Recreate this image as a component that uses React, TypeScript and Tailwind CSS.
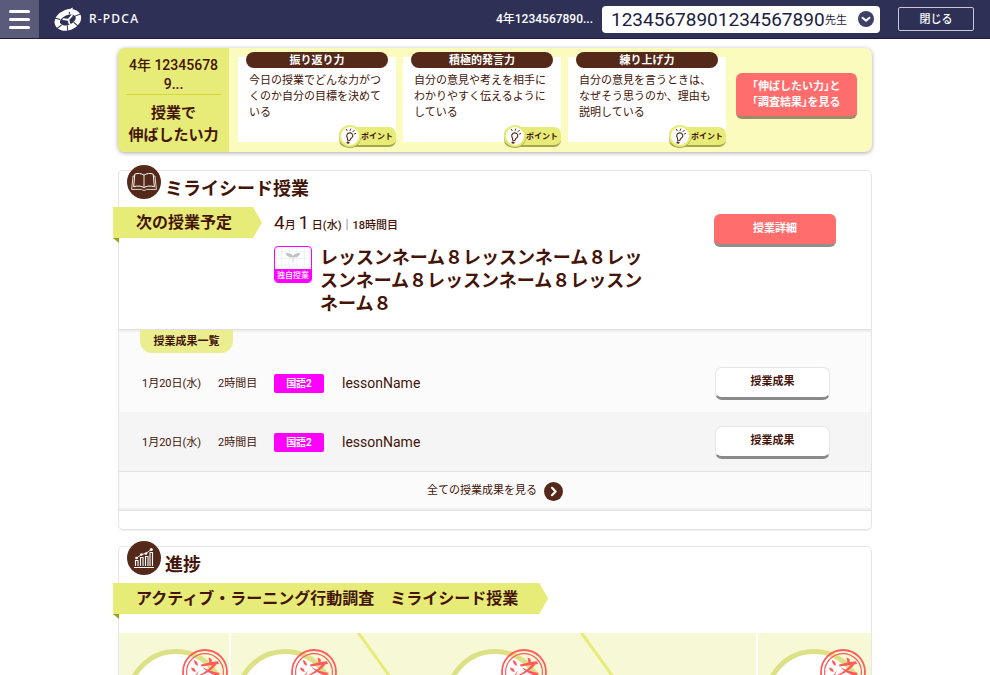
import React from "react";

const lessons = [
  { date: "1月20日(水)", period: "2時間目", subject: "国語2", name: "lessonName" },
  { date: "1月20日(水)", period: "2時間目", subject: "国語2", name: "lessonName" },
];

const abilities = [
  { title: "振り返り力", body: "今日の授業でどんな力がつくのか自分の目標を決めている" },
  { title: "積極的発言力", body: "自分の意見や考えを相手にわかりやすく伝えるようにしている" },
  { title: "練り上げ力", body: "自分の意見を言うときは、なぜそう思うのか、理由も説明している" },
];

function Logo() {
  return (
    <svg className="h-6 w-[30px]" viewBox="0 0 30 24" fill="none" aria-hidden="true">
      <g transform="rotate(-22 15 12)">
        <ellipse cx="14.5" cy="12.8" rx="11" ry="7.6" stroke="#fff" strokeWidth="5.4" />
        <path d="M3 6 L7.5 9.5 M0 17 L7 15 M10 24 L12 17.5 M22 23 L19 17 M29 12 L22 12 M21 2 L18 8" stroke="#2f3056" strokeWidth="1" />
        <path d="M15 12.8 L10 10 M15 12.8 L20.5 10 M15 12.8 L14.6 17.5" stroke="#fff" strokeWidth="1.8" />
      </g>
      <path d="M11 4.5 L20 0.6 L18.5 5 Z" fill="#fff" />
    </svg>
  );
}

function BulbIcon() {
  return (
    <svg className="h-[17px] w-[14px]" viewBox="0 0 14 18" fill="none" stroke="#54291a" strokeLinecap="round" aria-hidden="true">
      <path d="M4.6 13 L4.3 10.6 C2.8 8.6 3.4 5.5 6.4 5.2 C9.6 5 11 8 9.2 10 L7.6 11.6 L6.8 13.2 Z" strokeWidth="1.2" />
      <path d="M4.2 15.4 L5.6 15.6" strokeWidth="2" />
      <path d="M4 2.8 L3.2 1.4 M7.2 2.6 L7.8 1 M10 4 L11.6 2.4 M11.6 6.4 L13 5.8" strokeWidth="1" />
    </svg>
  );
}

function BookIcon() {
  return (
    <svg className="h-[22px] w-7" viewBox="0 0 28 22" fill="none" stroke="#fff" strokeWidth="1" strokeLinejoin="round" aria-hidden="true">
      <path d="M14 4.2 C11.5 2.2 7.5 2 4.8 3.2 L3.6 15.8 C7 14.6 11.5 14.8 14 16.6 C16.5 14.8 21 14.6 24.4 15.8 L23.2 3.2 C20.5 2 16.5 2.2 14 4.2 Z" />
      <path d="M14 4.2 V16.6" strokeWidth="0.9" />
      <path d="M4.6 5 H3 L1.6 18.4 H11.6 C12.4 19.6 15.6 19.6 16.4 18.4 H26.4 L25 5 H23.4" strokeWidth="0.8" />
    </svg>
  );
}

function ChartIcon() {
  return (
    <svg className="h-[22px] w-[22px]" viewBox="0 0 22 22" fill="none" stroke="#fff" aria-hidden="true">
      <path d="M1 20.5 H21" strokeWidth="1" />
      <path d="M2.5 19 V13.5 H5 V19 M7.5 19 V10.5 H10 V19 M12.5 19 V9.5 H15 V19 M17 19 V5.5 H19.5 V19" strokeWidth="1.1" />
      <path d="M3.5 11 L8.5 7.5 L13 6.5 L18 2.5" strokeWidth="0.9" />
      <g fill="#fff" stroke="none">
        <circle cx="3.5" cy="11" r="1.3" />
        <circle cx="8.5" cy="7.5" r="1.3" />
        <circle cx="13" cy="6.5" r="1.3" />
        <circle cx="18.3" cy="2.4" r="1.5" />
      </g>
    </svg>
  );
}

function LessonThumb() {
  return (
    <div className="flex h-[37px] w-[38px] shrink-0 flex-col overflow-hidden rounded-[4px] border border-[#ff00ff] bg-white">
      <svg className="min-h-0 flex-1" viewBox="0 0 36 23" fill="none" aria-hidden="true">
        <path d="M6 0 V23 M14 0 V23 M22 0 V23 M30 0 V23 M0 5 H36 M0 12 H36 M0 19 H36" stroke="#e3eff0" strokeWidth="0.7" />
        <path d="M17.6 16 V10.8 C14 11 11.2 9.8 10.4 6.4 C14 6.2 17 7 18 9.8 C19 7 22 6.2 25.6 6.4 C24.8 9.8 22 11 18.5 10.8 V16 Z" fill="#c2c2c2" />
      </svg>
      <span className="bg-[#ff00ff] text-center text-[8px] leading-[13px] font-medium text-white">独自授業</span>
    </div>
  );
}

function Ribbon({ children }: { children: React.ReactNode }) {
  return (
    <div className="-ml-[6px] w-fit">
      <h3 className="bg-[#e7eb78] pr-[30px] pl-[23px] text-[16px] leading-[31px] font-bold [clip-path:polygon(0_0,calc(100%-9px)_0,100%_50%,calc(100%-9px)_100%,0_100%)]">
        {children}
      </h3>
      <div className="h-[5px] w-[6px] bg-[#9aa01c] [clip-path:polygon(0_0,100%_0,100%_100%)]" />
    </div>
  );
}

function SectionTitle({ icon, children }: { icon: React.ReactNode; children: React.ReactNode }) {
  return (
    <div className="-mt-[6px] flex h-[42px] items-start gap-1 pl-2">
      <span className="flex size-[34px] items-center justify-center rounded-full bg-[#54291a]">{icon}</span>
      <h2 className="pt-[11px] text-[18px] leading-[26px] font-bold">{children}</h2>
    </div>
  );
}

function Stamp() {
  return (
    <svg className="absolute top-0 left-[56px] size-[46px]" viewBox="0 0 46 46" fill="none" aria-hidden="true">
      <circle cx="23" cy="23" r="22" stroke="#ff5c5c" strokeWidth="1.8" />
      <circle cx="23" cy="23" r="18.4" stroke="#ff5c5c" strokeWidth="1.2" />
      <g fill="#ff5c5c">
        <path d="M12 11 Q16.5 12.5 15.6 17 Q12 15.5 12 11 Z M9 18.5 Q14 19 13.6 23 Q9.6 22.5 9 18.5 Z M9 32 L17 21.5 L13 31 Z" />
        <path d="M26.5 8.5 Q31 9.5 29.6 13 L36 12.2 L37 15 L19.5 17.6 L19 15.4 L27.4 13.6 Z" />
        <path d="M32 14 L34.4 15.4 Q28 23.5 17.5 27 L17.2 26 Q26.5 21.6 32 14 Z" />
        <path d="M20.5 18 Q27.5 22.5 38 24 L35.4 27 Q26.5 25 20.5 18 Z" />
        <path d="M21.5 27 H24 V36 L21 38 Z M30 26.5 H32.6 V38 H30 Z M22 30 H31 V31.6 H22 Z" />
      </g>
    </svg>
  );
}

function Stage() {
  return (
    <div className="relative size-[100px]">
      <div className="size-full rounded-full border-[5px] border-[#dde186] bg-white" />
      <Stamp />
    </div>
  );
}

export default function App() {
  return (
    <div className="flex h-screen flex-col overflow-hidden bg-white font-[Roboto,'Noto_Sans_CJK_JP',sans-serif] text-[#431407]" lang="ja">
      <header className="flex h-[39px] shrink-0 items-center border-b border-[#1c1c40] bg-[#2f3056] pr-4 text-white">
        <button type="button" aria-label="メニュー" className="flex h-full w-[39px] flex-col items-center justify-center gap-[5px] bg-[#5a5b7a]">
          <span className="h-[3px] w-[21px] rounded-full bg-white" />
          <span className="h-[3px] w-[21px] rounded-full bg-white" />
          <span className="h-[3px] w-[21px] rounded-full bg-white" />
        </button>
        <a href="#" className="ml-[14px] flex items-center gap-[6px] font-['Noto_Sans'] text-[12px] font-medium tracking-widest">
          <Logo />
          R-PDCA
        </a>
        <span className="ml-auto text-[12px] font-medium">4年1234567890...</span>
        <label className="ml-[9px] flex h-[27px] w-[278px] items-center rounded-[4px] bg-white pr-[6px] pl-[9px] text-[#1c1c40]">
          <select className="appearance-none bg-transparent text-[19px] leading-[27px]">
            <option>12345678901234567890</option>
          </select>
          <span className="pt-[5px] text-[11px]">先生</span>
          <span className="ml-auto flex size-4 items-center justify-center rounded-full bg-[#3f4068]">
            <svg className="size-[10px]" viewBox="0 0 10 10" fill="none" stroke="#fff" strokeWidth="2" strokeLinecap="round" strokeLinejoin="round" aria-hidden="true">
              <path d="M1.5 3.8 L5 6.6 L8.5 3.8" />
            </svg>
          </span>
        </label>
        <button type="button" className="ml-[18px] h-6 w-[76px] rounded-[2px] border border-[#c9c9d6] pt-[2px] text-[11px] font-medium">
          閉じる
        </button>
      </header>

      <main className="mx-auto w-full max-w-[754px] pt-[9px]">
        <section className="flex h-[104px] overflow-hidden rounded-[7px] bg-[#fafbbd] shadow-[0_1px_4px_rgba(0,0,0,0.35)]">
          <div className="w-[111px] bg-[#e7eb78] px-2 pt-2 text-center">
            <p className="border-b border-[#d3d836] text-[14px] leading-[19px] font-medium">
              4年 12345678
              <br />
              9...
            </p>
            <h2 className="pt-[7px] text-[15px] leading-[22px] font-bold">
              授業で
              <br />
              伸ばしたい力
            </h2>
          </div>
          <div className="flex gap-[7px] pl-[9px]">
            {abilities.map((a) => (
              <article key={a.title} className="flex w-[158px] flex-col pt-1">
                <h3 className="z-10 mx-2 -mb-[11px] rounded-full bg-[#54291a] pt-px text-center text-[11px] leading-[15px] font-bold text-white">{a.title}</h3>
                <div className="relative h-[85px] bg-white px-[11px] pt-4 text-[11px] leading-4">
                  <p>{a.body}</p>
                  <button type="button" className="absolute right-0 -bottom-[5px] flex h-[20px] items-center rounded-[7px] border-b-2 border-[#a3a749] bg-[#e7eb78] pr-[3px] text-[8px] font-bold">
                    <span className="-my-1 flex size-[22px] items-center justify-center rounded-full border-2 border-[#e7eb78] bg-white shadow-[0_1px_0_#a3a749]">
                      <BulbIcon />
                    </span>
                    <span className="pt-px">ポイント</span>
                  </button>
                </div>
              </article>
            ))}
          </div>
          <button type="button" className="mt-[25px] ml-[10px] h-[46px] w-[121px] rounded-[6px] border-b-[3px] border-[#a08a6c] bg-[#ff6d6d] text-[11px] leading-4 font-bold text-white [font-feature-settings:'halt']">
            「伸ばしたい力」と
            <br />
            「調査結果」を見る
          </button>
        </section>

        <section className="mt-[18px] rounded-[5px] border border-[#e6e6e6] shadow-[0_1px_1px_#eee]">
          <SectionTitle icon={<BookIcon />}>ミライシード授業</SectionTitle>
          <div className="flex h-[122px] items-start">
            <Ribbon>次の授業予定</Ribbon>
            <div className="ml-[12px] w-[380px] pt-[5px]">
              <p className="text-[11px] leading-[22px] font-medium">
                <span className="text-[19px] font-normal">4</span>月 <span className="text-[19px] font-normal">1</span> 日(水)｜18時間目
              </p>
              <div className="mt-[9px] flex gap-2">
                <LessonThumb />
                <h3 className="text-[18px] leading-[23px] font-bold">レッスンネーム８レッスンネーム８レッスンネーム８レッスンネーム８レッスンネーム８</h3>
              </div>
            </div>
            <button type="button" className="mt-[7px] mr-[35px] ml-auto h-[33px] w-[122px] rounded-[6px] border-b-[3px] border-[#8f8f8f] bg-[#ff6d6d] text-[11px] font-bold text-white">
              授業詳細
            </button>
          </div>
          <div className="border-t border-[#e0e0e0] bg-[#fbfbfb] shadow-[inset_0_2px_2px_#eee]">
            <h3 className="ml-[21px] w-[93px] rounded-b-[12px] bg-[#eaee8e] text-center text-[11px] leading-[23px] font-bold">授業成果一覧</h3>
            <table className="w-full table-fixed text-left text-[11px]">
              <colgroup>
                <col className="w-[99px]" />
                <col className="w-[56px]" />
                <col className="w-[68px]" />
                <col />
                <col className="w-[156px]" />
              </colgroup>
              <tbody>
                {lessons.map((l, i) => (
                  <tr key={i} className="h-[59px] even:bg-[#f5f5f5]">
                    <td className="pt-1 pl-[23px]">{l.date}</td>
                    <td className="pt-1">{l.period}</td>
                    <td className="pt-[2px]">
                      <span className="block w-[50px] rounded-[2px] bg-[#ff00ff] text-center text-[10px] leading-[19px] font-bold text-white">{l.subject}</span>
                    </td>
                    <td className="pt-[2px] text-[14px]">{l.name}</td>
                    <td className="pt-[2px]">
                      <button type="button" className="h-[33px] w-[115px] rounded-[7px] border border-b-[3px] border-[#e6e6e6] border-b-[#8a8a8a] bg-white font-bold">
                        授業成果
                      </button>
                    </td>
                  </tr>
                ))}
              </tbody>
            </table>
            <a href="#" className="flex h-10 items-center justify-center gap-[7px] border-y border-[#e3e3e3] text-[11px] shadow-[inset_0_-2px_2px_#eee]">
              全ての授業成果を見る
              <span className="flex size-[19px] items-center justify-center rounded-full bg-[#54291a]">
                <svg className="size-[11px]" viewBox="0 0 11 11" fill="none" stroke="#fff" strokeWidth="2.2" strokeLinecap="round" strokeLinejoin="round" aria-hidden="true">
                  <path d="M4 1.8 L7.6 5.5 L4 9.2" />
                </svg>
              </span>
            </a>
          </div>
          <div className="h-[18px]" />
        </section>

        <section className="mt-4 rounded-[5px] border border-[#e6e6e6]">
          <SectionTitle icon={<ChartIcon />}>進捗</SectionTitle>
          <Ribbon>アクティブ・ラーニング行動調査　ミライシード授業</Ribbon>
          <div className="mt-[14px] flex h-[140px] bg-[#f7f8d6]">
            <div className="w-[112px] border-r-2 border-white pt-4 pl-[7px]">
              <Stage />
            </div>
            <div className="w-[111px] pt-4 pl-1">
              <Stage />
            </div>
            <div className="relative flex-1 pt-4 pl-[103px]">
              <svg className="absolute top-0 left-0 h-[140px] w-full" fill="none" stroke="#e7eb78" strokeWidth="3" aria-hidden="true">
                <path d="M15 -2 L67 70 L15 142 M238 -2 L290 70 L238 142" />
              </svg>
              <Stage />
            </div>
            <div className="w-[115px] border-l-2 border-white pt-4 pl-[6px]">
              <Stage />
            </div>
          </div>
        </section>
      </main>
    </div>
  );
}
